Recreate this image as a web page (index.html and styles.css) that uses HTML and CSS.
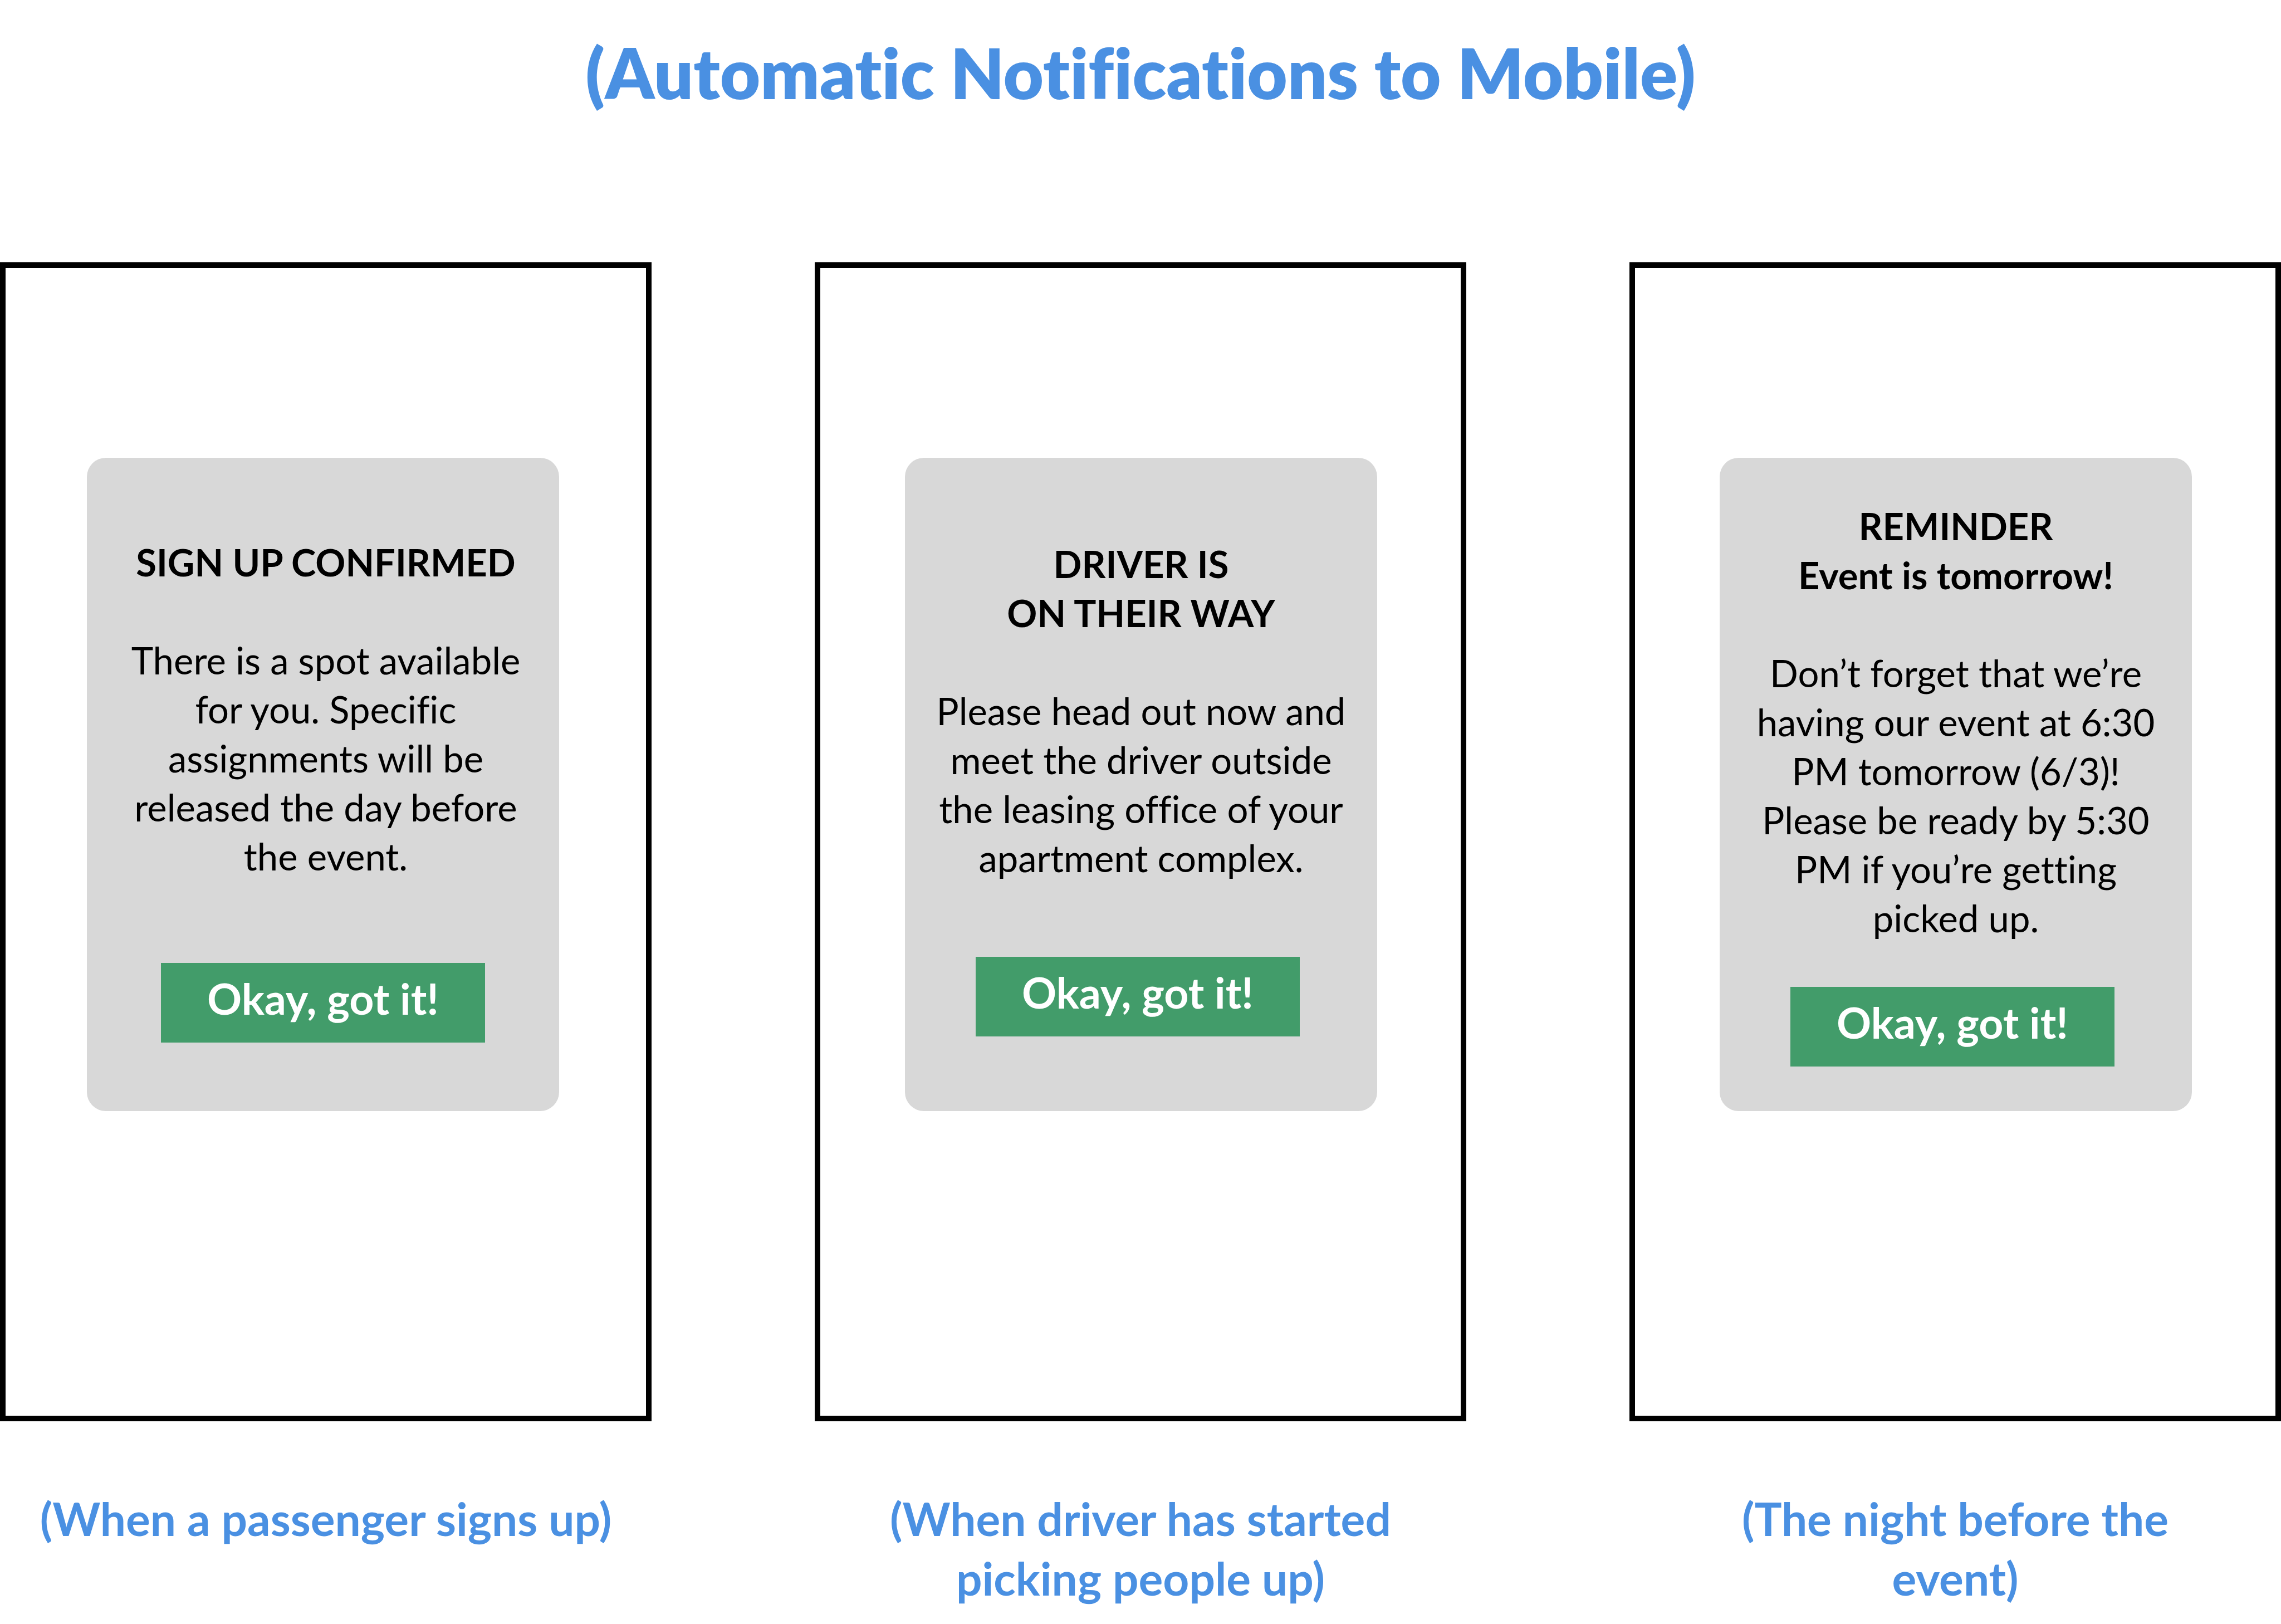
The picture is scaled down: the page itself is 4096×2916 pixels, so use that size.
FILE: index.html
```html
<!DOCTYPE html>
<html lang="en">
<head>
  <meta charset="utf-8">
  <meta name="viewport" content="width=device-width, initial-scale=1">
  <title>Automatic Notifications to Mobile</title>
  <link rel="stylesheet" href="styles.css">
</head>
<body>
  <header class="page-header">
    <h1 class="page-title">(Automatic Notifications to Mobile)</h1>
  </header>
  <main class="screens">
    <figure class="screen screen--signup">
      <div class="phone">
        <section class="card">
          <div class="message">
            <h2 class="message-title">SIGN UP CONFIRMED</h2>
            <p class="message-text">There is a spot available for you. Specific assignments will be released the day before the event.</p>
          </div>
          <div class="actions">
            <button class="button" type="button">Okay, got it!</button>
          </div>
        </section>
      </div>
      <figcaption class="caption">(When a passenger signs up)</figcaption>
    </figure>
    <figure class="screen screen--driver">
      <div class="phone">
        <section class="card">
          <div class="message">
            <h2 class="message-title">DRIVER IS<br>ON THEIR WAY</h2>
            <p class="message-text">Please head out now and meet the driver outside the leasing office of your apartment complex.</p>
          </div>
          <div class="actions">
            <button class="button" type="button">Okay, got it!</button>
          </div>
        </section>
      </div>
      <figcaption class="caption">(When driver has started<br>picking people up)</figcaption>
    </figure>
    <figure class="screen screen--reminder">
      <div class="phone">
        <section class="card">
          <div class="message">
            <h2 class="message-title">REMINDER<br>Event is tomorrow!</h2>
            <p class="message-text">Don’t forget that we’re having our event at 6:30 PM tomorrow (6/3)! Please be ready by 5:30 PM if you’re getting picked up.</p>
          </div>
          <div class="actions">
            <button class="button" type="button">Okay, got it!</button>
          </div>
        </section>
      </div>
      <figcaption class="caption">(The night before the<br>event)</figcaption>
    </figure>
  </main>
</body>
</html>
```
FILE: styles.css
```css
* {
  box-sizing: border-box;
}

body {
  margin: 0;
  background: #fff;
  color: #000;
  font-family: Lato, "Open Sans", sans-serif;
  font-variant-ligatures: none;
}

.page-header {
  padding: 55px 0 266px;
  text-align: center;
}

.page-title {
  margin: 0;
  color: #4a90e2;
  font-size: 125px;
  font-weight: 800;
  line-height: 150px;
}

.screens {
  display: grid;
  grid-template-columns: repeat(3, 1fr);
  gap: 293px;
}

.screen {
  margin: 0;
}

.phone {
  aspect-ratio: 1170 / 2081;
  padding: 341px 150px 0 152px;
  border: 10px solid #000;
}

.card {
  min-height: 1173px;
  border-radius: 34px;
  background: #d8d8d8;
  text-align: center;
}

.message {
  padding: 146px 48px 134px;
}

.message-title,
.message-text {
  margin: 0;
  font-size: 67px;
  line-height: 88px;
}

.message-title {
  margin-bottom: 88px;
  font-weight: 700;
}

.message-text {
  font-weight: 400;
}

.actions {
  display: flex;
  justify-content: center;
  padding-right: 12px;
}

.button {
  width: 582px;
  padding: 17px 0 34px;
  border: 0;
  background: #429c6a;
  color: #fff;
  font-family: inherit;
  font-size: 77px;
  font-weight: 700;
  line-height: 92px;
}

.caption {
  margin-top: 121px;
  color: #4a90e2;
  font-size: 82px;
  font-weight: 700;
  line-height: 107px;
  text-align: center;
}

/* The sign-up card sits left of centre, its text centred on the phone */
.screen--signup .phone {
  padding-right: 156px;
  padding-left: 146px;
}

.screen--signup .message {
  padding: 143px 43px 148px 53px;
}

.screen--signup .actions {
  padding-right: 0;
}

/* Longer text, tighter spacing */
.screen--reminder .message {
  padding-top: 78px;
  padding-bottom: 80px;
}
```
